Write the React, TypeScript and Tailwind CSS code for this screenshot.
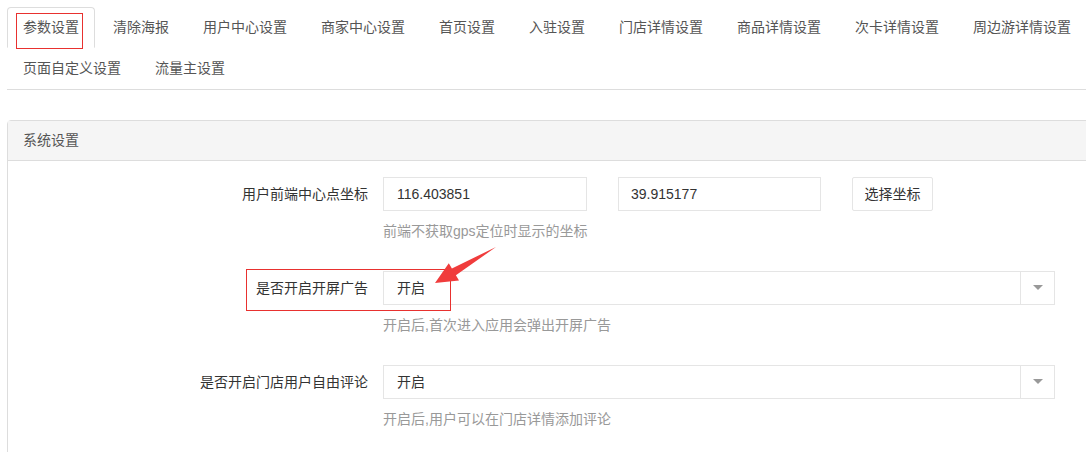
/**
 * 参数设置 — system settings tab
 */
const font = "font-['Liberation_Sans','Noto_Sans_CJK_SC',sans-serif]";

const row1 = ['参数设置', '清除海报', '用户中心设置', '商家中心设置', '首页设置', '入驻设置', '门店详情设置', '商品详情设置', '次卡详情设置', '周边游详情设置'];
const row2 = ['页面自定义设置', '流量主设置'];

function Tab({ label, active }: { label: string; active?: boolean }) {
  return (
    <div
      className={
        'h-[41px] px-[15px] mr-[2px] flex items-center text-[14px] text-[#555] whitespace-nowrap border rounded-t-[4px] ' +
        (active ? 'border-[#ddd] border-b-white bg-white' : 'border-transparent')
      }
    >
      {label}
    </div>
  );
}

function Caret() {
  return (
    <div className="w-[34px] h-full border-l border-[#e5e5e5] flex items-center justify-center">
      <svg width="10" height="6" viewBox="0 0 10 6">
        <path d="M0 0 L10 0 L5 5 Z" fill="#999" />
      </svg>
    </div>
  );
}

function SelectBox({ value }: { value: string }) {
  return (
    <div className="w-[672px] h-[34px] border border-[#e5e5e5] flex items-center bg-white">
      <span className="flex-1 pl-[13px] text-[14px] text-[#333]">{value}</span>
      <Caret />
    </div>
  );
}

function FormRow({ label, help, children }: { label: string; help: string; children: React.ReactNode }) {
  return (
    <div className="flex mb-[30px]">
      <div className="w-[360px] h-[34px] flex items-center justify-end text-[14px] text-[#333] shrink-0">{label}</div>
      <div className="ml-[15px]">
        {children}
        <div className="mt-[10px] leading-[20px] text-[14px] text-[#999]">{help}</div>
      </div>
    </div>
  );
}

export default function App() {
  return (
    <div className={`relative w-[1086px] h-[452px] overflow-hidden bg-white ${font}`}>
      <div className="pl-[7px] pt-[7px]">
        {/* Tabs */}
        <div className="border-b border-[#ddd]">
          <div className="flex">
            {row1.map((t, i) => (
              <Tab key={t} label={t} active={i === 0} />
            ))}
          </div>
          <div className="flex">
            {row2.map((t) => (
              <Tab key={t} label={t} />
            ))}
          </div>
        </div>

        {/* Panel */}
        <div className="mt-[30px] w-[1100px] border border-[#ddd] rounded-t-[4px]">
          <div className="h-[40px] bg-[#f5f5f5] border-b border-[#ddd] flex items-center pl-[15px] text-[14px] text-[#555]">
            系统设置
          </div>
          <div className="pt-[16px]">
            <FormRow label="用户前端中心点坐标" help="前端不获取gps定位时显示的坐标">
              <div className="flex items-center">
                <div className="w-[204px] h-[34px] border border-[#e5e5e5] flex items-center pl-[13px] text-[14px] text-[#333]">116.403851</div>
                <div className="ml-[31px] w-[203px] h-[34px] border border-[#e5e5e5] flex items-center pl-[12px] text-[14px] text-[#333]">39.915177</div>
                <div className="ml-[31px] w-[81px] h-[34px] border border-[#e5e5e5] rounded-[2px] flex items-center justify-center text-[14px] text-[#333]">选择坐标</div>
              </div>
            </FormRow>
            <FormRow label="是否开启开屏广告" help="开启后,首次进入应用会弹出开屏广告">
              <SelectBox value="开启" />
            </FormRow>
            <FormRow label="是否开启门店用户自由评论" help="开启后,用户可以在门店详情添加评论">
              <SelectBox value="开启" />
            </FormRow>
          </div>
        </div>
      </div>

      {/* Annotations */}
      <div className="absolute left-[16px] top-[13px] w-[67px] h-[36px] border border-[#e8312f]" />
      <div className="absolute left-[246px] top-[269px] w-[205px] h-[42px] border border-[#e8312f]" />
      <svg className="absolute left-0 top-0 pointer-events-none" width="1086" height="452">
        <polygon points="435,283 448.8,263.2 451.9,268.4 496,247 455.9,275.2 459,280.4" fill="#f03c3c" />
      </svg>
    </div>
  );
}
